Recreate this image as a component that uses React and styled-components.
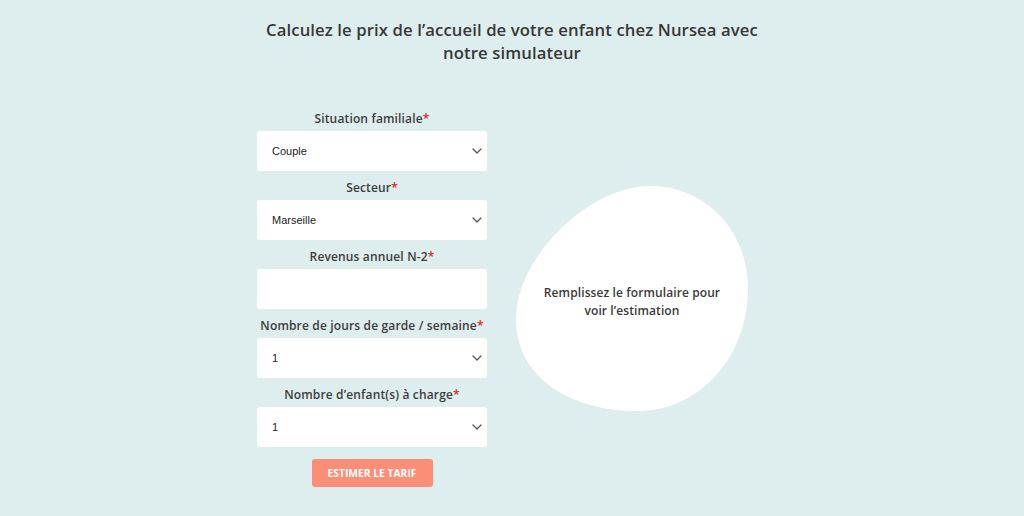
import React from "react";
import styled, { createGlobalStyle } from "styled-components";

const Global = createGlobalStyle`
  html, body { margin: 0; padding: 0; background: #deeded; }
  body { font-family: "Open Sans", "Noto Sans", sans-serif; color: #3b3b3b; }
  * { box-sizing: border-box; }
`;

const Page = styled.div`
  width: 1024px;
  height: 516px;
  background: #deeded;
  padding-top: 18px;
  overflow: hidden;
`;

const Title = styled.h1`
  margin: 0 auto;
  width: 520px;
  text-align: center;
  font-size: 16.7px;
  line-height: 23px;
  font-weight: 600;
  letter-spacing: 0.1px;
  color: #383838;
`;

const Row = styled.div`
  display: flex;
  justify-content: center;
  align-items: center;
  gap: 24px;
  margin-top: 45px;
`;

const Form = styled.form`
  width: 230px;
  display: flex;
  flex-direction: column;
  align-items: stretch;
`;

const Field = styled.div`
  display: flex;
  flex-direction: column;
  margin-bottom: 7px;
`;

const Label = styled.label`
  text-align: center;
  font-size: 12px;
  line-height: 19px;
  font-weight: 600;
  letter-spacing: 0.15px;
  color: #3d3d3d;
  margin-bottom: 3px;
  white-space: nowrap;
`;

const Star = styled.span`
  color: #e5221b;
`;

const SelectWrap = styled.div`
  position: relative;
  height: 40px;
`;

const Select = styled.select`
  appearance: none;
  -webkit-appearance: none;
  width: 100%;
  height: 40px;
  border: none;
  border-radius: 3px;
  background: #ffffff;
  padding: 0 30px 0 15px;
  font-family: "Liberation Sans", Arial, sans-serif;
  font-size: 11px;
  color: #222;
  outline: none;
`;

const Input = styled.input`
  width: 100%;
  height: 40px;
  border: none;
  border-radius: 3px;
  background: #ffffff;
  padding: 0 15px;
  font-family: "Liberation Sans", Arial, sans-serif;
  font-size: 11px;
  outline: none;
`;

const Chevron = styled.svg`
  position: absolute;
  right: 5px;
  top: 17px;
  width: 10px;
  height: 6px;
  pointer-events: none;
`;

const Button = styled.button`
  align-self: center;
  margin-top: 5px;
  width: 121px;
  height: 28px;
  border: none;
  border-radius: 3px;
  background: #fc8e77;
  color: #ffffff;
  font-family: "Open Sans", "Noto Sans", sans-serif;
  font-weight: 700;
  font-size: 10.3px;
`;

const BlobWrap = styled.div`
  width: 256px;
  height: 232px;
  position: relative;
  display: flex;
  align-items: center;
  justify-content: center;
  margin-top: 4px;
`;

const BlobShape = styled.svg`
  position: absolute;
  left: 1px;
  top: 0;
  width: 240px;
  height: 230px;
`;

const BlobText = styled.p`
  position: relative;
  margin: 4px 14px 0 0;
  width: 186px;
  text-align: center;
  font-size: 12px;
  line-height: 18px;
  font-weight: 600;
  letter-spacing: 0.1px;
  color: #3a3a3a;
`;

function Arrow() {
  return (
    <Chevron viewBox="0 0 10 6">
      <path d="M1 1 L5 5 L9 1" fill="none" stroke="#555" strokeWidth="1.3" strokeLinecap="round" strokeLinejoin="round" />
    </Chevron>
  );
}

function SelectField({ label, options }) {
  return (
    <Field>
      <Label>
        {label}
        <Star>*</Star>
      </Label>
      <SelectWrap>
        <Select defaultValue={options[0]}>
          {options.map((o) => (
            <option key={o}>{o}</option>
          ))}
        </Select>
        <Arrow />
      </SelectWrap>
    </Field>
  );
}

export default function App() {
  return (
    <Page>
      <Global />
      <Title>Calculez le prix de l’accueil de votre enfant chez Nursea avec notre simulateur</Title>
      <Row>
        <Form onSubmit={(e) => e.preventDefault()}>
          <SelectField label="Situation familiale" options={["Couple", "Célibataire"]} />
          <SelectField label="Secteur" options={["Marseille", "Paris", "Lyon"]} />
          <Field>
            <Label>
              Revenus annuel N-2<Star>*</Star>
            </Label>
            <Input type="text" />
          </Field>
          <SelectField label="Nombre de jours de garde / semaine" options={["1", "2", "3", "4", "5"]} />
          <SelectField label="Nombre d’enfant(s) à charge" options={["1", "2", "3", "4"]} />
          <Button type="submit">ESTIMER LE TARIF</Button>
        </Form>
        <BlobWrap>
          <BlobShape viewBox="0 0 240 230">
            <path
              d="M138,2 C192,2 236,45 236,105 C236,170 190,227 125,227 C60,227 4,195 4,135 C4,72 78,2 138,2 Z"
              fill="#ffffff"
            />
          </BlobShape>
          <BlobText>Remplissez le formulaire pour voir l’estimation</BlobText>
        </BlobWrap>
      </Row>
    </Page>
  );
}
